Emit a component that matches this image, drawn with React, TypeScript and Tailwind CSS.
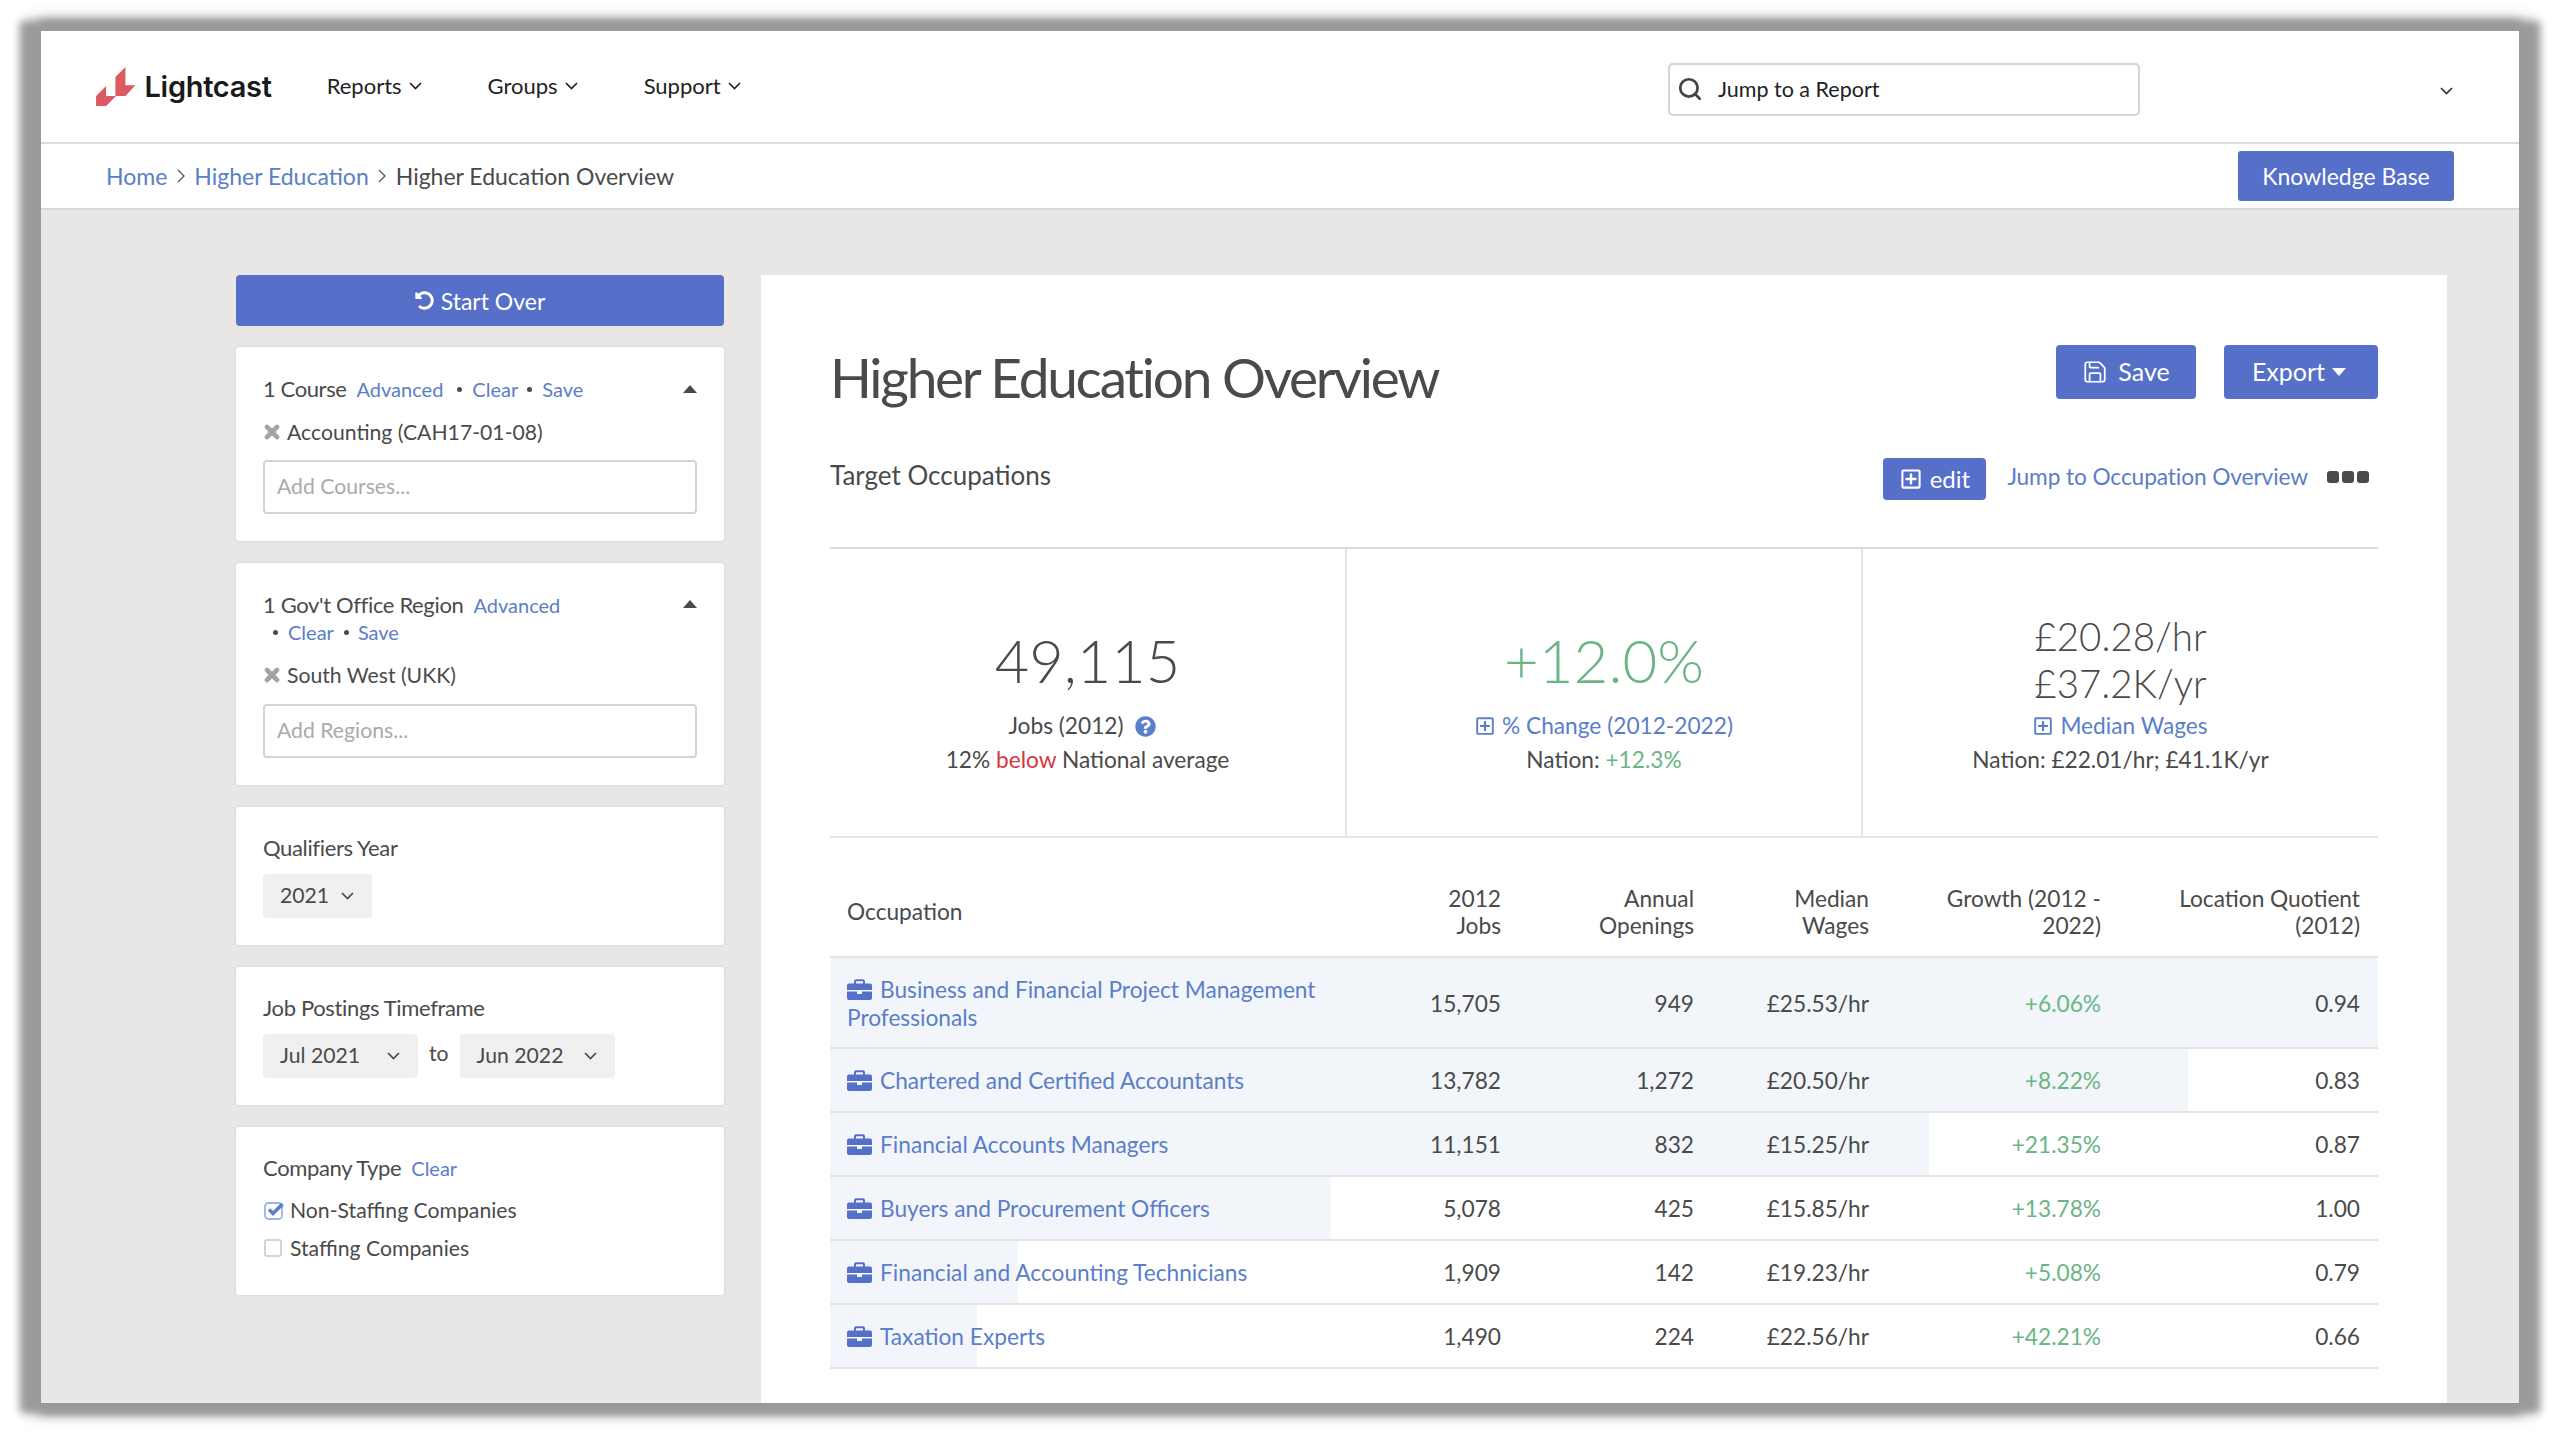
import { Save, Search } from 'lucide-react';
import { FaQuestionCircle, FaRegPlusSquare, FaUndoAlt } from 'react-icons/fa';

const occupations = [
  { name: 'Business and Financial Project Management Professionals', jobs: 15705, openings: '949', wage: '£25.53/hr', growth: '+6.06%', lq: '0.94' },
  { name: 'Chartered and Certified Accountants', jobs: 13782, openings: '1,272', wage: '£20.50/hr', growth: '+8.22%', lq: '0.83' },
  { name: 'Financial Accounts Managers', jobs: 11151, openings: '832', wage: '£15.25/hr', growth: '+21.35%', lq: '0.87' },
  { name: 'Buyers and Procurement Officers', jobs: 5078, openings: '425', wage: '£15.85/hr', growth: '+13.78%', lq: '1.00' },
  { name: 'Financial and Accounting Technicians', jobs: 1909, openings: '142', wage: '£19.23/hr', growth: '+5.08%', lq: '0.79' },
  { name: 'Taxation Experts', jobs: 1490, openings: '224', wage: '£22.56/hr', growth: '+42.21%', lq: '0.66' },
];

const Chevron = ({ className = '' }: { className?: string }) => (
  <svg width="13" height="8" viewBox="0 0 13 8" className={`shrink-0 ${className}`}>
    <path d="M1 1L6.5 6.5L12 1" fill="none" stroke="currentColor" strokeWidth="1.7" />
  </svg>
);

const Crumb = () => (
  <svg width="8" height="14" viewBox="0 0 8 14" className="mx-[9.5px] shrink-0">
    <path d="M1 1L7 7L1 13" fill="none" stroke="#555" strokeWidth="1.3" />
  </svg>
);

const NavItem = ({ label, className }: { label: string; className: string }) => (
  <div className={`flex items-center gap-[7px] text-[22px] text-[#222] ${className}`}>
    <span>{label}</span>
    <Chevron />
  </div>
);

const Card = ({ className, children }: { className: string; children: React.ReactNode }) => (
  <div className={`rounded-[3px] bg-white px-[27px] shadow-[0_0_2px_rgba(0,0,0,0.15)] ${className}`}>{children}</div>
);

const Caret = () => (
  <svg width="14" height="8" viewBox="0 0 14 8" className="shrink-0"><path d="M7 0L14 8H0Z" fill="#4a4a4a" /></svg>
);

const Dot = ({ className = '' }: { className?: string }) => (
  <span className={`h-[5px] w-[5px] shrink-0 self-center rounded-full bg-[#4a4a4a] ${className}`} />
);

const Selected = ({ label }: { label: string }) => (
  <div className="flex items-center gap-[7px] leading-[26px]">
    <svg width="16" height="16" viewBox="0 0 16 16" className="ml-[1px] shrink-0">
      <path d="M3 3L13 13M13 3L3 13" stroke="#a3a3a3" strokeWidth="4.6" strokeLinecap="round" />
    </svg>
    <span>{label}</span>
  </div>
);

const AddInput = ({ placeholder, className = '' }: { placeholder: string; className?: string }) => (
  <div className={`flex h-[54px] w-[434px] items-center rounded-[4px] border-2 border-[#d4d4d4] px-[12px] text-[#aaa] ${className}`}>{placeholder}</div>
);

const Select = ({ label, className }: { label: string; className: string }) => (
  <div className={`flex items-center justify-between rounded-[4px] bg-[#f0f0f0] pl-[17px] pr-[18px] ${className}`}>
    <span>{label}</span>
    <Chevron />
  </div>
);

const Briefcase = () => (
  <svg width="25" height="21" viewBox="0 0 25 21" className="mr-[8px] inline-block -translate-y-[3px] align-middle">
    <path d="M8 5V2.5A1.2 1.2 0 0 1 9.2 1.3H15.8A1.2 1.2 0 0 1 17 2.5V5" fill="none" stroke="#566fc9" strokeWidth="2" />
    <path d="M2 4.5H23A2 2 0 0 1 25 6.5V11H0V6.5A2 2 0 0 1 2 4.5Z" fill="#566fc9" />
    <path d="M0 12.5H10V15H15V12.5H25V19A2 2 0 0 1 23 21H2A2 2 0 0 1 0 19Z" fill="#566fc9" />
  </svg>
);

const rowGrid = 'grid grid-cols-[571px_116px_194px_175px_231px_261px] border-b-2 border-[#e4e4e4]';
const statCol = 'flex h-full flex-col items-center justify-start';

export default function App() {
  return (
    <div className="h-[1437px] w-[2560px] overflow-hidden bg-white pl-[41px] pt-[31px] font-['Lato',sans-serif] text-[#4a4a4a]">
      <div className="flex h-[1372px] w-[2478px] flex-col bg-[#e8e7e5] shadow-[11px_0_8px_10px_#9a9a9a,-11px_0_8px_10px_#9a9a9a,0_0_16px_9px_#9a9a9a]">
        {/* top nav */}
        <div className="flex h-[113px] shrink-0 items-start border-b-2 border-[#dcdcdc] bg-white pr-[66px]">
          <div className="ml-[55px] mt-[36px] flex items-center">
            <svg width="39.5" height="39" viewBox="47 50 118 117">
              <path d="M135 50V105H165L135 137H105V80Z" fill="#dc5a62" />
              <path d="M77 107V137H107L77 167H47V137Z" fill="#dc5a62" />
            </svg>
            <span className="ml-[9px] font-['Inter',sans-serif] text-[29px] font-semibold leading-none tracking-[-0.3px] text-[#1a1a1a]">Lightcast</span>
          </div>
          <NavItem label="Reports" className="ml-[55px] mt-[38px]" />
          <NavItem label="Groups" className="ml-[66px] mt-[38px]" />
          <NavItem label="Support" className="ml-[66px] mt-[38px]" />
          <div className="ml-auto mt-[32px] flex h-[53px] w-[472px] items-center rounded-[5px] border-2 border-[#d4d4d4] pl-[7px] text-[21.5px] text-[#222]">
            <Search size={26} strokeWidth={2.5} className="-translate-y-[1px] text-[#444]" />
            <span className="ml-[15px]">Jump to a Report</span>
          </div>
          <Chevron className="ml-[300px] mt-[56px] text-[#333]" />
        </div>

        {/* breadcrumb */}
        <div className="flex h-[66px] shrink-0 items-center justify-between border-b-2 border-[#d9d9d9] bg-white pl-[65px] pr-[65px] text-[23px]">
          <div className="flex items-center">
            <span className="text-[#5b7ec8]">Home</span>
            <Crumb />
            <span className="text-[#5b7ec8]">Higher Education</span>
            <Crumb />
            <span>Higher Education Overview</span>
          </div>
          <div className="flex h-[50px] w-[216px] items-center justify-center rounded-[3px] bg-[#566fc9] text-white">Knowledge Base</div>
        </div>

        {/* body */}
        <div className="flex min-h-0 flex-1 gap-[37px] pl-[195px] pt-[65px]">
          <div className="flex w-[488px] shrink-0 flex-col text-[21.2px]">
            <div className="flex h-[51px] items-center justify-center gap-[7px] rounded-[4px] bg-[#566fc9] text-[23px] text-white">
              <FaUndoAlt size={19} />
              <span className="pt-[2px]">Start Over</span>
            </div>

            <Card className="mt-[21px] h-[194px] pt-[29px]">
              <div className="flex items-start justify-between leading-[26px]">
                <div className="flex items-baseline text-[20px] text-[#5b7ec8]">
                  <span className="text-[22px] tracking-[-0.4px] text-[#4a4a4a]">1 Course</span>
                  <span className="ml-[10px]">Advanced</span>
                  <Dot className="ml-[14px]" />
                  <span className="ml-[10px]">Clear</span>
                  <Dot className="ml-[9px]" />
                  <span className="ml-[10px]">Save</span>
                </div>
                <div className="pt-[9px]"><Caret /></div>
              </div>
              <div className="mt-[17px]"><Selected label="Accounting (CAH17-01-08)" /></div>
              <AddInput placeholder="Add Courses..." className="mt-[15px]" />
            </Card>

            <Card className="mt-[22px] h-[222px] pt-[28px]">
              <div className="flex items-start justify-between leading-[27px]">
                <div className="text-[20px] text-[#5b7ec8]">
                  <div className="flex items-baseline">
                    <span className="text-[22px] tracking-[-0.35px] text-[#4a4a4a]">1 Gov't Office Region</span>
                    <span className="ml-[10px]">Advanced</span>
                  </div>
                  <div className="flex items-baseline pl-[10px]">
                    <Dot />
                    <span className="ml-[10px]">Clear</span>
                    <Dot className="ml-[10px]" />
                    <span className="ml-[9px]">Save</span>
                  </div>
                </div>
                <div className="pt-[9px]"><Caret /></div>
              </div>
              <div className="mt-[16px]"><Selected label="South West (UKK)" /></div>
              <AddInput placeholder="Add Regions..." className="mt-[16px]" />
            </Card>

            <Card className="mt-[22px] h-[138px] pt-[28px]">
              <div className="text-[22px] leading-[26px] tracking-[-0.35px]">Qualifiers Year</div>
              <Select label="2021" className="mt-[13px] h-[44px] w-[109px]" />
            </Card>

            <Card className="mt-[22px] h-[138px] pt-[28px]">
              <div className="text-[22px] leading-[26px] tracking-[-0.35px]">Job Postings Timeframe</div>
              <div className="mt-[13px] flex items-center">
                <Select label="Jul 2021" className="h-[44px] w-[155px]" />
                <span className="ml-[11px] mr-[11px] -translate-y-[2px]">to</span>
                <Select label="Jun 2022" className="h-[44px] w-[155px]" />
              </div>
            </Card>

            <Card className="mt-[22px] h-[168px] pt-[28px]">
              <div className="flex items-baseline leading-[26px]">
                <span className="text-[22px] tracking-[-0.35px]">Company Type</span>
                <span className="ml-[10px] text-[20px] text-[#5b7ec8]">Clear</span>
              </div>
              <div className="mt-[16px] flex items-center gap-[5px] leading-[26px]">
                <svg width="21" height="19" viewBox="0 0 21 19" className="ml-[1px] shrink-0">
                  <rect x="1" y="2" width="17" height="16" rx="3.5" fill="none" stroke="#9ab2e6" strokeWidth="1.8" />
                  <path d="M5 8.5L9 12.5L18.5 3" fill="none" stroke="#5b7ec8" strokeWidth="3.6" />
                </svg>
                <span>Non-Staffing Companies</span>
              </div>
              <div className="mt-[12px] flex items-center gap-[8px] leading-[26px]">
                <span className="ml-[1px] h-[18px] w-[18px] rounded-[3px] border-2 border-[#d4d4d4]" />
                <span>Staffing Companies</span>
              </div>
            </Card>
          </div>

          {/* main panel */}
          <div className="w-[1686px] bg-white pl-[69px] pr-[69px] text-[22.7px]">
            <div className="flex h-[124px] items-start justify-between pt-[70px]">
              <h1 className="-mt-[2px] text-[55px] leading-[68px] tracking-[-2.25px]">Higher Education Overview</h1>
              <div className="flex gap-[28px] text-[25px] text-white">
                <div className="flex h-[54px] w-[140px] items-center justify-center gap-[10px] rounded-[4px] bg-[#566fc9]">
                  <Save size={26} strokeWidth={1.6} />
                  <span>Save</span>
                </div>
                <div className="flex h-[54px] w-[154px] items-center justify-center gap-[7px] rounded-[4px] bg-[#566fc9] pr-[4px]">
                  <span>Export</span>
                  <svg width="14" height="8" viewBox="0 0 14 8"><path d="M0 0H14L7 8Z" fill="#fff" /></svg>
                </div>
              </div>
            </div>

            <div className="flex h-[150px] items-start justify-between border-b-2 border-[#dcdcdc] pt-[59px]">
              <div className="-mt-[1px] text-[26px] leading-[36px]">Target Occupations</div>
              <div className="flex items-center">
                <div className="flex h-[42px] w-[103px] items-center justify-center gap-[8px] rounded-[4px] bg-[#566fc9] text-[24px] text-white">
                  <FaRegPlusSquare size={22} />
                  <span>edit</span>
                </div>
                <span className="ml-[21px] -translate-y-[2px] tracking-[-0.1px] text-[#5b7ec8]">Jump to Occupation Overview</span>
                <div className="ml-[19px] flex -translate-y-[2px] gap-[3px] pr-[9px]">
                  <span className="h-[12px] w-[12px] rounded-[3px] bg-[#4a4a4a]" />
                  <span className="h-[12px] w-[12px] rounded-[3px] bg-[#4a4a4a]" />
                  <span className="h-[12px] w-[12px] rounded-[3px] bg-[#4a4a4a]" />
                </div>
              </div>
            </div>

            <div className="grid h-[289px] grid-cols-[517px_516px_1fr] border-b-2 border-[#e4e4e4]">
              <div className={`${statCol} border-r-2 border-[#e4e4e4] pt-[75px]`}>
                <div className="text-[59.5px] font-light leading-[72px]">49,115</div>
                <div className="mt-[13px] flex items-center gap-[11px] pr-[11px] leading-[34px]">
                  <span>Jobs (2012)</span>
                  <FaQuestionCircle size={21} className="text-[#5b7ec8]" />
                </div>
                <div className="leading-[34px]">12% <span className="text-[#d8363d]">below</span> National average</div>
              </div>
              <div className={`${statCol} border-r-2 border-[#e4e4e4] pt-[75px]`}>
                <div className="text-[60px] font-light leading-[72px] text-[#6bb585]">+12.0%</div>
                <div className="mt-[13px] flex items-center gap-[7px] leading-[34px] text-[#5b7ec8]">
                  <FaRegPlusSquare size={20} />
                  <span>% Change (2012-2022)</span>
                </div>
                <div className="leading-[34px]">Nation: <span className="text-[#6bb585]">+12.3%</span></div>
              </div>
              <div className={`${statCol} pt-[64px]`}>
                <div className="text-center text-[38.5px] font-light leading-[47px]">
                  <div>£20.28/hr</div>
                  <div>£37.2K/yr</div>
                </div>
                <div className="mt-[2px] flex items-center gap-[7px] leading-[34px] text-[#5b7ec8]">
                  <FaRegPlusSquare size={20} />
                  <span>Median Wages</span>
                </div>
                <div className="leading-[34px]">Nation: £22.01/hr; £41.1K/yr</div>
              </div>
            </div>

            <div className={`${rowGrid} h-[120px] items-center pt-[30px] leading-[27.5px]`}>
              <div className="px-[17px]">Occupation</div>
              <div className="pl-[17px] pr-[16px] text-right">2012 Jobs</div>
              <div className="pl-[60px] pr-[17px] text-right">Annual Openings</div>
              <div className="pl-[60px] pr-[17px] text-right">Median Wages</div>
              <div className="pl-[17px] pr-[16px] text-right">Growth (2012 - 2022)</div>
              <div className="pl-[17px] pr-[18px] text-right">Location Quotient (2012)</div>
            </div>

            {occupations.map((o, i) => (
              <div
                key={o.name}
                className={`${rowGrid} items-center bg-no-repeat pt-[2px] leading-[27.5px] ${i === 0 ? 'h-[91px]' : 'h-[64px]'}`}
                style={{
                  backgroundImage: 'linear-gradient(#f2f5fa, #f2f5fa)',
                  backgroundSize: `${(o.jobs / occupations[0].jobs) * 100}% 100%`,
                }}
              >
                <div className="px-[17px] text-[#5b7ec8]">
                  <Briefcase />
                  {o.name}
                </div>
                <div className="pl-[17px] pr-[16px] text-right">{o.jobs.toLocaleString('en-US')}</div>
                <div className="px-[17px] text-right">{o.openings}</div>
                <div className="px-[17px] text-right">{o.wage}</div>
                <div className="pl-[17px] pr-[16px] text-right text-[#6bb585]">{o.growth}</div>
                <div className="pl-[17px] pr-[18px] text-right">{o.lq}</div>
              </div>
            ))}
          </div>
        </div>
      </div>
    </div>
  );
}
